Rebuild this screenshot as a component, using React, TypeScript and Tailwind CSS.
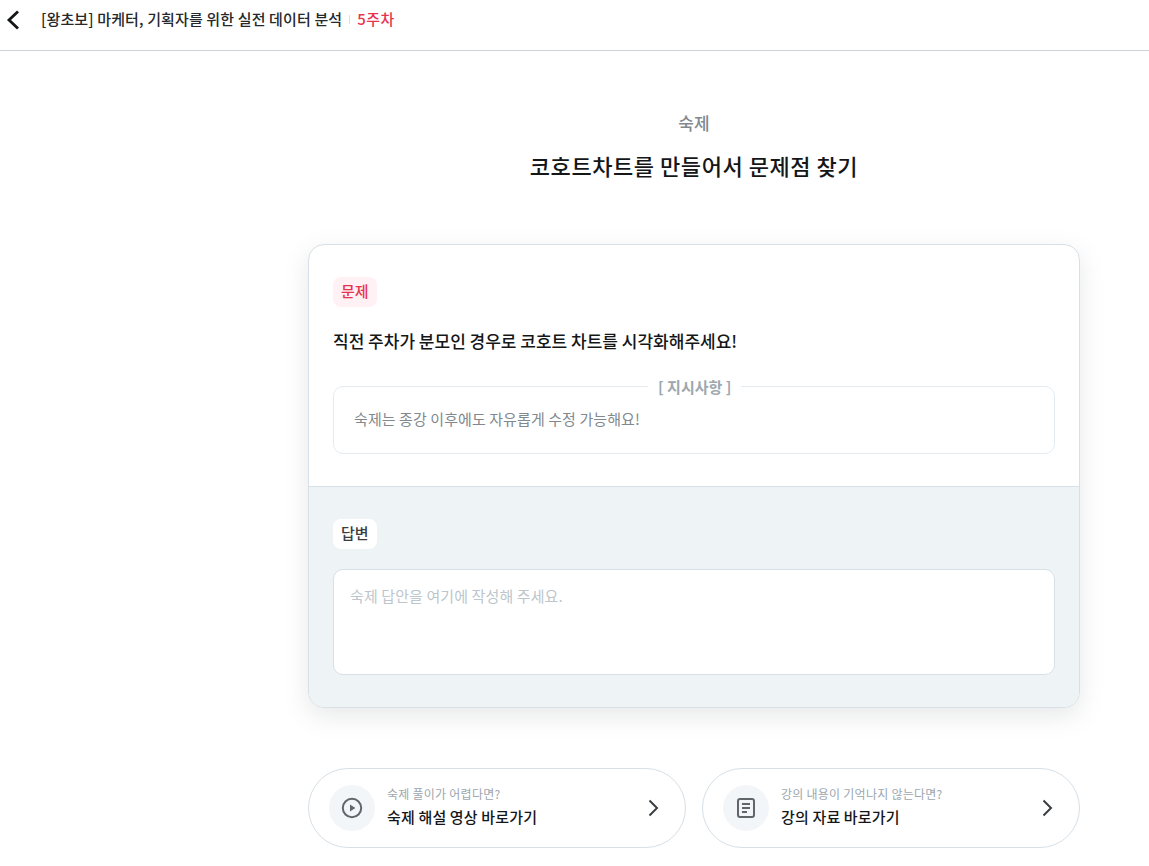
function PlayIcon() {
  return (
    <svg width="24" height="24" viewBox="0 0 24 24" fill="none">
      <circle cx="12" cy="12" r="9.2" stroke="#5f666c" strokeWidth="2" />
      <path d="M10 8.4v7.2l5.4-3.6z" fill="#5f666c" />
    </svg>
  );
}

function DocIcon() {
  return (
    <svg width="24" height="24" viewBox="0 0 24 24" fill="none">
      <rect x="4" y="3" width="16" height="18" rx="2" stroke="#5f666c" strokeWidth="2" />
      <path d="M8 8h8M8 12h8M8 16h5" stroke="#5f666c" strokeWidth="1.8" />
    </svg>
  );
}

function LinkCard({ icon, hint, title }: { icon: React.ReactNode; hint: string; title: string }) {
  return (
    <a className="flex h-20 w-[378px] items-center rounded-[40px] border border-[#d7e0e6] bg-white pl-5 pr-[26px]">
      <div className="flex h-[46px] w-[46px] items-center justify-center rounded-full bg-[#f3f6f9]">{icon}</div>
      <div className="ml-3 flex-1 pb-[3px]">
        <p className="text-[12px] leading-[18px] tracking-[0.25px] text-[#9da7ae]">{hint}</p>
        <p className="mt-[3px] text-[15px] leading-[22px] tracking-[0.15px] font-medium text-[#141617]">{title}</p>
      </div>
      <svg width="11" height="18" viewBox="0 0 11 18" fill="none">
        <path d="M1.5 1.5 9 9l-7.5 7.5" stroke="#3a3e41" strokeWidth="2" />
      </svg>
    </a>
  );
}

export default function App() {
  return (
    <div className="min-h-[866px] bg-white font-['Noto_Sans_CJK_KR','Noto_Sans',sans-serif]">
      {/* Header */}
      <header className="flex h-[51px] items-start border-b border-[#c9d3d9] pt-[8px]">
        <svg className="ml-[3px] mt-[1px]" width="20" height="22" viewBox="0 0 20 22" fill="none">
          <path d="M15 2.5 6 11l9 8.5" stroke="#141617" strokeWidth="2.8" />
        </svg>
        <span className="ml-[18px] text-[15px] leading-[22px] tracking-[0.13px] font-medium text-[#26282a]">
          [왕초보] 마케터, 기획자를 위한 실전 데이터 분석
        </span>
        <span className="ml-[7px] mt-[7px] h-[9px] w-px bg-[#d7e0e6]" />
        <span className="ml-[7px] text-[15px] leading-[22px] tracking-[0.4px] font-medium text-[#e8344e]">5주차</span>
      </header>

      <main className="ml-[308px] w-[772px]">
        <p className="mt-[60px] text-center text-[17px] leading-6 font-medium text-[#81898f]">숙제</p>
        <h1 className="mt-[14px] text-center text-[22px] leading-[33px] tracking-[0.55px] font-medium text-[#141617]">
          코호트차트를 만들어서 문제점 찾기
        </h1>

        {/* Homework card */}
        <section className="mt-[62px] overflow-hidden rounded-2xl border border-[#d7e0e6] bg-white shadow-[0_8px_24px_rgba(95,102,108,0.15)]">
          <div className="px-6 pt-8 pb-8">
            <span className="block w-fit rounded-lg bg-[#fff1f4] px-2 pt-[3px] pb-[5px] text-[15px] leading-[22px] font-medium text-[#e8344e]">
              문제
            </span>
            <p className="mt-[22px] text-[17px] leading-6 font-medium text-[#141617]">
              직전 주차가 분모인 경우로 코호트 차트를 시각화해주세요!
            </p>
            <div className="relative mt-[33px] h-[68px] rounded-[10px] border border-[#e4ebf0] px-5 pt-[21px]">
              <span className="absolute left-[314px] top-[-11px] bg-white px-[10px] text-[15px] leading-[21px] font-semibold text-[#9da7ae]">
                [ 지시사항 ]
              </span>
              <p className="text-[15px] leading-[21px] tracking-[0.08px] text-[#81898f]">숙제는 종강 이후에도 자유롭게 수정 가능해요!</p>
            </div>
          </div>
          <div className="border-t border-[#d7e0e6] bg-[#eef3f6] px-6 pt-8 pb-8">
            <span className="block w-fit rounded-lg bg-white px-2 pt-[3px] pb-[5px] text-[15px] leading-[22px] font-medium text-[#3a3e41]">
              답변
            </span>
            <textarea
              readOnly
              placeholder="숙제 답안을 여기에 작성해 주세요."
              className="mt-5 block h-[106px] w-full resize-none rounded-[10px] border border-[#d7e0e6] bg-white px-4 py-[15px] text-[15px] leading-[21px] tracking-[0.1px] placeholder:text-[#bcc6cb]"
            />
          </div>
        </section>

        <div className="mt-[60px] flex gap-4">
          <LinkCard icon={<PlayIcon />} hint="숙제 풀이가 어렵다면?" title="숙제 해설 영상 바로가기" />
          <LinkCard icon={<DocIcon />} hint="강의 내용이 기억나지 않는다면?" title="강의 자료 바로가기" />
        </div>
      </main>
    </div>
  );
}
